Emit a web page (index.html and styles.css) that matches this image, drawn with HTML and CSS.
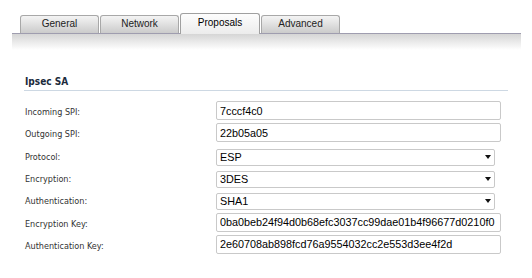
FILE: index.html
```html
<!DOCTYPE html>
<html lang="en">
<head>
  <meta charset="UTF-8">
  <title>Ipsec SA Proposals</title>
  <link rel="stylesheet" href="styles.css">
</head>
<body>
  <div class="tabwrap">
    <div class="tabs">
      <div class="tab">General</div>
      <div class="tab">Network</div>
      <div class="tab active">Proposals</div>
      <div class="tab">Advanced</div>
    </div>
    <div class="band"></div>
  </div>

  <div class="section">
    <h3>Ipsec SA</h3>
    <div class="form">
      <label>Incoming SPI:</label>
      <input type="text" value="7cccf4c0">

      <label>Outgoing SPI:</label>
      <input type="text" value="22b05a05">

      <label>Protocol:</label>
      <div class="select"><select><option>ESP</option></select></div>

      <label>Encryption:</label>
      <div class="select"><select><option>3DES</option></select></div>

      <label>Authentication:</label>
      <div class="select"><select><option>SHA1</option></select></div>

      <label>Encryption Key:</label>
      <input type="text" value="0ba0beb24f94d0b68efc3037cc99dae01b4f96677d0210f0">

      <label>Authentication Key:</label>
      <input type="text" value="2e60708ab898fcd76a9554032cc2e553d3ee4f2d">
    </div>
  </div>
</body>
</html>
```

FILE: styles.css
```css
body {
  margin: 0;
  background: #fff;
  font-family: "DejaVu Sans Condensed", "DejaVu Sans", sans-serif;
}

.tabwrap {
  margin: 0 11px 0 12px;
  padding-top: 13px;
}

.tabs {
  display: flex;
  align-items: flex-end;
  height: 20px;
  padding-left: 8px;
}

.tab {
  width: 77px;
  height: 17px;
  margin-right: 1px;
  border: 1px solid #a8a8a8;
  border-bottom: none;
  border-radius: 3px 3px 0 0;
  background: linear-gradient(#f4f4f4, #cbcbcb);
  font-family: "Liberation Sans", Arial, sans-serif;
  font-size: 10px;
  line-height: 16px;
  color: #222;
  text-align: center;
}

.tab.active {
  width: 78px;
  height: 20px;
  margin-bottom: -1px;
  position: relative;
  border-color: #a0a0a0;
  background: linear-gradient(#fdfdfd, #ececec);
  line-height: 17px;
  color: #000;
}

.band {
  height: 16px;
  border-top: 1px solid #9f9daf;
  background: linear-gradient(#d5d5d5, #ffffff);
}

.section {
  margin: 26px 24px 0 24px;
}

h3 {
  margin: 0;
  padding: 0 0 2px 1px;
  font-size: 10px;
  line-height: 12px;
  font-weight: bold;
  color: #1b2a3c;
  border-bottom: 1px solid #cdd8e3;
}

.form {
  display: grid;
  grid-template-columns: 192px 285px;
  grid-auto-rows: 22.33px;
  margin-top: 10px;
}

.form label {
  padding: 5px 0 0 1px;
  font-size: 9px;
  line-height: 12px;
  color: #333;
}

.form input {
  box-sizing: border-box;
  width: 285px;
  height: 19px;
  margin: 0;
  padding: 0 3px;
  border: 1px solid #c9c9c9;
  border-radius: 2px;
  font-family: "Liberation Sans", Arial, sans-serif;
  font-size: 10.8px;
  color: #000;
  outline: none;
}

.select {
  position: relative;
  width: 279px;
  height: 17px;
}

.select select {
  box-sizing: border-box;
  width: 279px;
  height: 17px;
  margin: 0;
  padding: 0 3px;
  border: 1px solid #c9c9c9;
  border-radius: 2px;
  background: #fff;
  appearance: none;
  -webkit-appearance: none;
  font-family: "Liberation Sans", Arial, sans-serif;
  font-size: 10.8px;
  line-height: 15px;
  color: #000;
}

.select::after {
  content: "";
  position: absolute;
  right: 4px;
  top: 9px;
  border-left: 3.5px solid transparent;
  border-right: 3.5px solid transparent;
  border-top: 4px solid #111;
}
```
